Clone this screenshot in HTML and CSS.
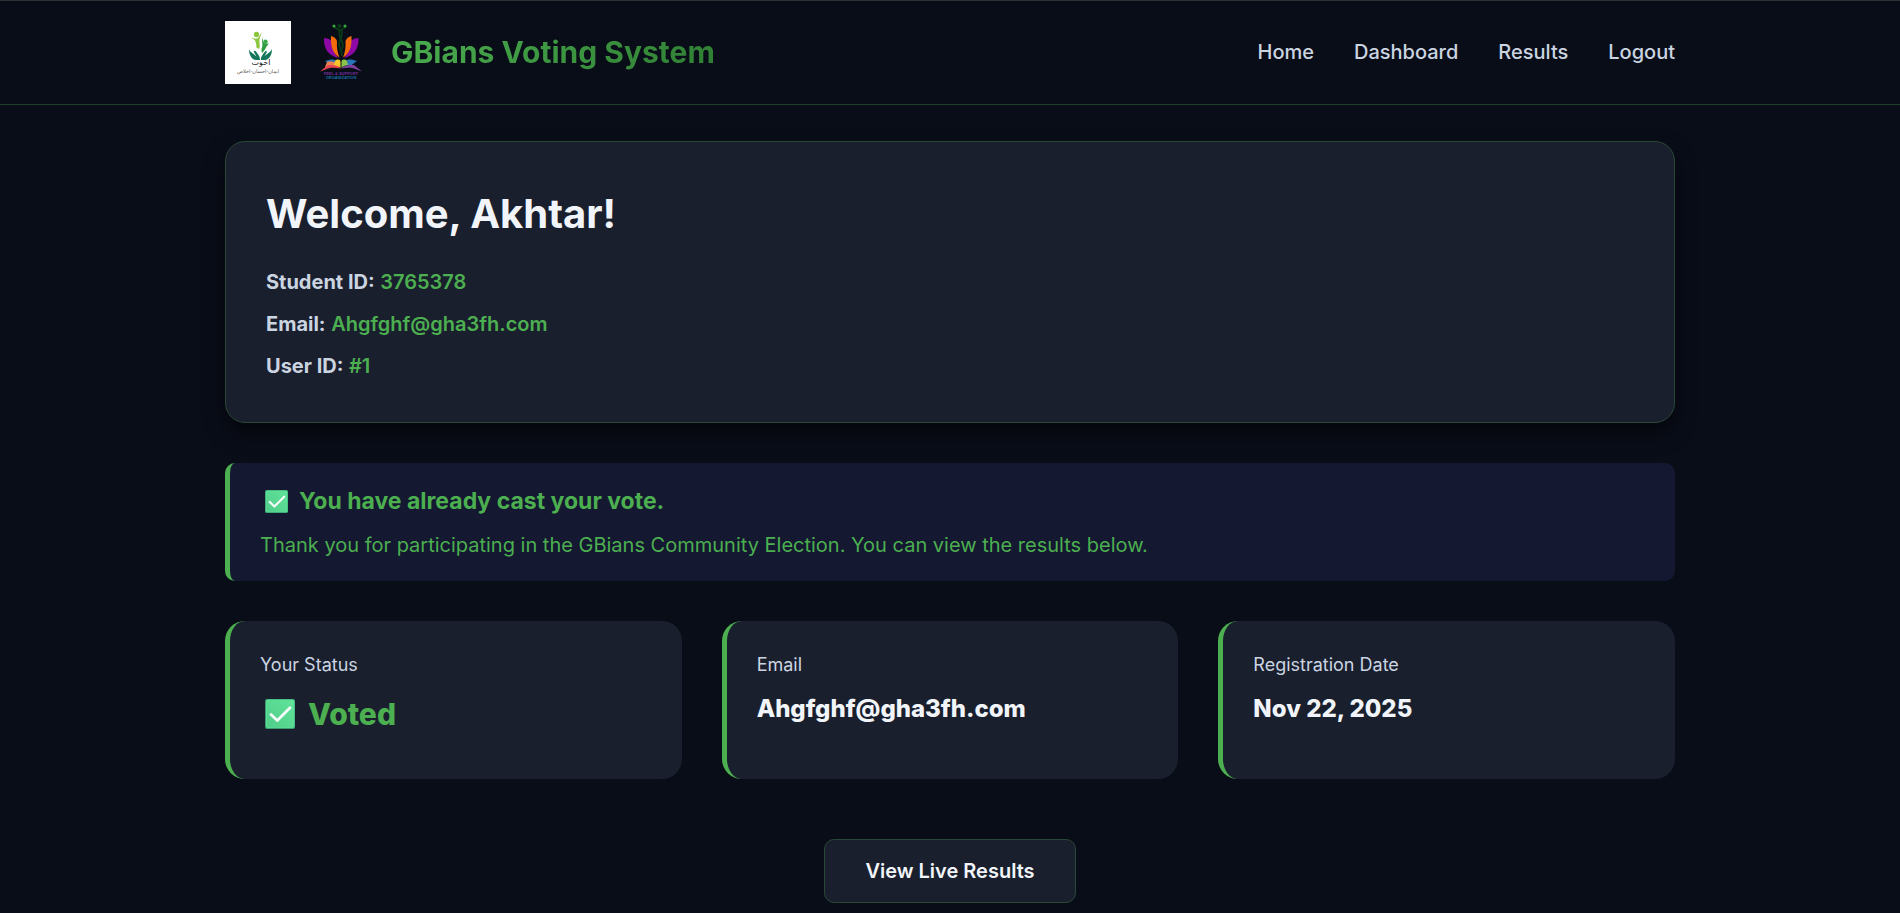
FILE: index.html
```html
<!DOCTYPE html>
<html lang="en">
<head>
<meta charset="utf-8">
<meta name="viewport" content="width=device-width, initial-scale=1">
<title>GBians Voting System</title>
<link rel="stylesheet" href="styles.css">
</head>
<body>
<svg class="symbols" aria-hidden="true">
  <defs>
    <linearGradient id="tick-fill" x1="0" y1="1" x2="1" y2="0">
      <stop offset="0" stop-color="#50cd89"/><stop offset="1" stop-color="#60e39a"/>
    </linearGradient>
    <symbol id="tick" viewBox="0 0 30 30">
      <rect width="30" height="30" rx="2" fill="#399b6c"/>
      <rect x="1" y="0.5" width="28.5" height="28.5" rx="2" fill="#5bdf98"/>
      <rect x="2" y="2" width="26.5" height="26.5" rx="1" fill="url(#tick-fill)"/>
      <path d="M6 15.5l6.300 6L25 8.800" fill="none" stroke="#f8fdfb" stroke-width="2.800" stroke-linecap="round" stroke-linejoin="round"/>
    </symbol>
  </defs>
</svg>

<header class="site-header">
  <div class="container header-row">
    <a class="brand" href="#">
      <svg class="logo-first" viewBox="0 0 66 63" role="img" aria-label="Akhuwat">
        <rect width="66" height="63" fill="#fff"/>
        <circle cx="31.500" cy="13.500" r="2.700" fill="#8cc63f"/>
        <path d="M36.800 11c-.6 3-1.800 5.500-2.300 7.500-.6 3.600.9 5-.2 9.500l-3-1.500c.3-3-.5-5.600-1.600-7.500l-3.500-2 4.800.8c3.200-.4 4-3.800 5.800-6.800z" fill="#8cc63f"/>
        <circle cx="40.500" cy="20.800" r="2.200" fill="#39a845"/>
        <path d="M37.300 16c.3 3 .8 5 2.500 7.100l4.200-.7-2.500 3.200c-.8 1.800-1.800 4-4.500 6.400-.6-2.400-.9-4 .2-6.200.7-2.800-.8-5.700.1-9.800z" fill="#2f9e44"/>
        <path d="M24 28c.6 2 1.500 2.800 3 3.700l4.500 3.800-2.500-4.200c-.8-1.800 1.300-2 2.200-.5 2 2.700 4 5 3.800 8.200h-4c-4.500-.5-7-5-7-11zM47 28c-.8 2-1.800 2.900-3.200 3.800L39.500 35l2.300-3.800c.6-1.500-1.300-1.700-2.200-.3-2 2.700-3.900 5-3.700 8.100h3.900c4.500-.5 7.200-5 7.200-11z" fill="#14765a"/>
        <text class="arabic" x="36" y="44" font-size="8" text-anchor="middle" fill="#222">اخوت</text>
        <text class="arabic" x="33" y="52" font-size="5" text-anchor="middle" fill="#555">ایمان-احسان-اخلاص</text>
      </svg>
      <svg class="logo-second" viewBox="0 0 42 60" role="img" aria-label="Feel and Support Organization">
        <path d="M4 15c3 0 5.500 1 8 3 0 7 1.500 12 6.500 17C9 33 3.500 26 4 15zM38.500 15c-3 0-5.500 1-8 3 0 7-1.500 12-6.500 17C33.500 33 39 26 38.500 15z" fill="#8e08a5"/>
        <path d="M11 13c3 .5 5 2.500 6 5-.5 6 .5 11.500 2.500 16.500C13 31 10.500 24 11 13zM31.500 13c-3 .5-5 2.500-6 5 .5 6-.5 11.500-2.500 16.500C29.500 31 32 24 31.500 13z" fill="#f36b0a"/>
        <path d="M14 4c2 1 4 3 6 3s4-2 5.500-3M20 6c-4 9 6 12 2 20M21 6c4 10-5 12-1 19 1 2 2 4 2 8" fill="none" stroke="#093c16" stroke-width="1.700"/>
        <circle cx="19.500" cy="3" r="2" fill="#093c16"/>
        <circle cx="14" cy="3" r="1.600" fill="#35a53c"/><circle cx="25" cy="3" r="1.600" fill="#35a53c"/>
        <path d="M5 38l5.500-1.500c4-.5 7 1 10 6H11zM37 38l-5.500-1.500c-4-.5-7 1-10 6H31z" fill="#2874b7"/>
        <path d="M7 39c4-2 10 0 13 5L5 44z" fill="#ed8050"/>
        <path d="M15 38c2-2 5.500-2 5.500 1V45C19 43 16 42 14 42z" fill="#f8c528"/>
        <path d="M27 38c-2-2-5.500-2-5.500 1V45c1.500-2 4.500-3 6.500-3z" fill="#8bc34a"/>
        <path d="M0 48.500L8 42c5 0 9 .2 13 3.500-7-1-12-.9-15.500 1z" fill="#e94451"/>
        <path d="M42 48.500L34 42c-5 0-9 .2-13 3.500 7-1 12-.9 15.500 1z" fill="#80409c"/>
        <text class="logo-name" x="21" y="52" font-size="4" text-anchor="middle" fill="#713099">FEEL &amp; SUPPORT</text>
        <text class="logo-name" x="21" y="56" font-size="4" text-anchor="middle" fill="#176da0">ORGANIZATION</text>
      </svg>
      <span class="brand-name">GBians Voting System</span>
    </a>
    <nav class="nav">
      <a href="#">Home</a>
      <a href="#">Dashboard</a>
      <a href="#">Results</a>
      <a href="#">Logout</a>
    </nav>
  </div>
</header>

<main class="container main">
  <section class="welcome">
    <h1>Welcome, Akhtar!</h1>
    <p><strong>Student ID:</strong> <span>3765378</span></p>
    <p><strong>Email:</strong> <span>Ahgfghf@gha3fh.com</span></p>
    <p><strong>User ID:</strong> <span>#1</span></p>
  </section>

  <section class="notice">
    <h2><svg class="notice-tick" aria-hidden="true"><use href="#tick"/></svg>You have already cast your vote.</h2>
    <p>Thank you for participating in the GBians Community Election. You can view the results below.</p>
  </section>

  <section class="stats">
    <article class="stat">
      <h3>Your Status</h3>
      <p class="stat-status"><svg class="stat-tick" aria-hidden="true"><use href="#tick"/></svg>Voted</p>
    </article>
    <article class="stat">
      <h3>Email</h3>
      <p class="stat-value">Ahgfghf@gha3fh.com</p>
    </article>
    <article class="stat">
      <h3>Registration Date</h3>
      <p class="stat-value">Nov 22, 2025</p>
    </article>
  </section>

  <div class="actions">
    <a class="button" href="#">View Live Results</a>
  </div>
</main>
</body>
</html>
```
FILE: styles.css
```css
* {
  box-sizing: border-box;
  margin: 0;
  padding: 0;
}

body {
  background: #090d18;
  color: #f1f5f9;
  font-family: Inter, "Open Sans", sans-serif;
  font-size: 20px;
  line-height: 32px;
}

a {
  color: inherit;
  text-decoration: none;
}

.symbols {
  display: block;
  width: 0;
  height: 0;
}

.container {
  width: 100%;
  max-width: 1450px;
  margin: 0 auto;
}

.site-header {
  border-top: 1px solid #303134;
  border-bottom: 1px solid #203c2a;
}

.header-row {
  display: flex;
  align-items: center;
  justify-content: space-between;
  padding: 20px 0;
}

.brand {
  display: flex;
  align-items: center;
}

.logo-first {
  width: 66px;
  height: 63px;
}

.logo-second {
  width: 42px;
  height: 60px;
  margin: 0 29px;
}

.arabic {
  font-family: "DejaVu Sans", sans-serif;
}

.logo-name {
  font-family: "Liberation Sans", sans-serif;
  font-weight: 700;
}

.brand-name {
  padding-bottom: 2px;
  background: linear-gradient(135deg, #4caf50, #2e7d32);
  background-clip: text;
  -webkit-background-clip: text;
  color: transparent;
  font-size: 30px;
  font-weight: 700;
  line-height: 48px;
}

.nav {
  display: flex;
  gap: 40px;
  padding-bottom: 2px;
  color: #cbd5e1;
  font-weight: 500;
}

.main {
  display: flex;
  flex-direction: column;
  gap: 40px;
  padding: 36px 0 8px;
}

.welcome {
  padding: 40px;
  background: #1a1f2e;
  border: 1px solid #294737;
  border-radius: 20px;
  box-shadow: 0 10px 20px rgba(0, 0, 0, 0.5);
}

.welcome h1 {
  margin-bottom: 20px;
  font-size: 40px;
  font-weight: 700;
  line-height: 64px;
}

.welcome p {
  color: #cbd5e1;
}

.welcome p + p {
  margin-top: 10px;
}

.welcome strong {
  font-weight: 700;
}

.welcome span {
  color: #4caf50;
  font-weight: 600;
}

.notice {
  padding: 20px 30px;
  background: #141830;
  border-left: 5px solid #4caf50;
  border-radius: 10px;
  color: #4caf50;
}

.notice h2 {
  display: flex;
  align-items: center;
  margin-bottom: 10px;
  font-size: 23px;
  font-weight: 700;
  line-height: 36px;
}

.notice-tick {
  width: 23px;
  height: 23px;
  margin: 0 11px 0 5px;
}

.stats {
  display: grid;
  grid-template-columns: repeat(3, 1fr);
  gap: 40px;
}

.stat {
  padding: 30px 30px 40px;
  background: #1a1f2e;
  border-left: 5px solid #4caf50;
  border-radius: 20px;
}

.stat h3 {
  margin-bottom: 10px;
  color: #cbd5e1;
  font-size: 18px;
  font-weight: 400;
  line-height: 28px;
}

.stat-status {
  display: flex;
  align-items: center;
  color: #4caf50;
  font-size: 30px;
  font-weight: 800;
  line-height: 50px;
}

.stat-tick {
  width: 30px;
  height: 30px;
  margin: 0 13px 0 5px;
}

.stat-value {
  font-size: 24px;
  font-weight: 800;
  line-height: 40px;
}

.actions {
  display: flex;
  justify-content: center;
  padding-top: 20px;
}

.button {
  padding: 15px 40px;
  background: #1a1f2e;
  border: 1px solid #294737;
  border-radius: 10px;
  font-weight: 600;
}
```
